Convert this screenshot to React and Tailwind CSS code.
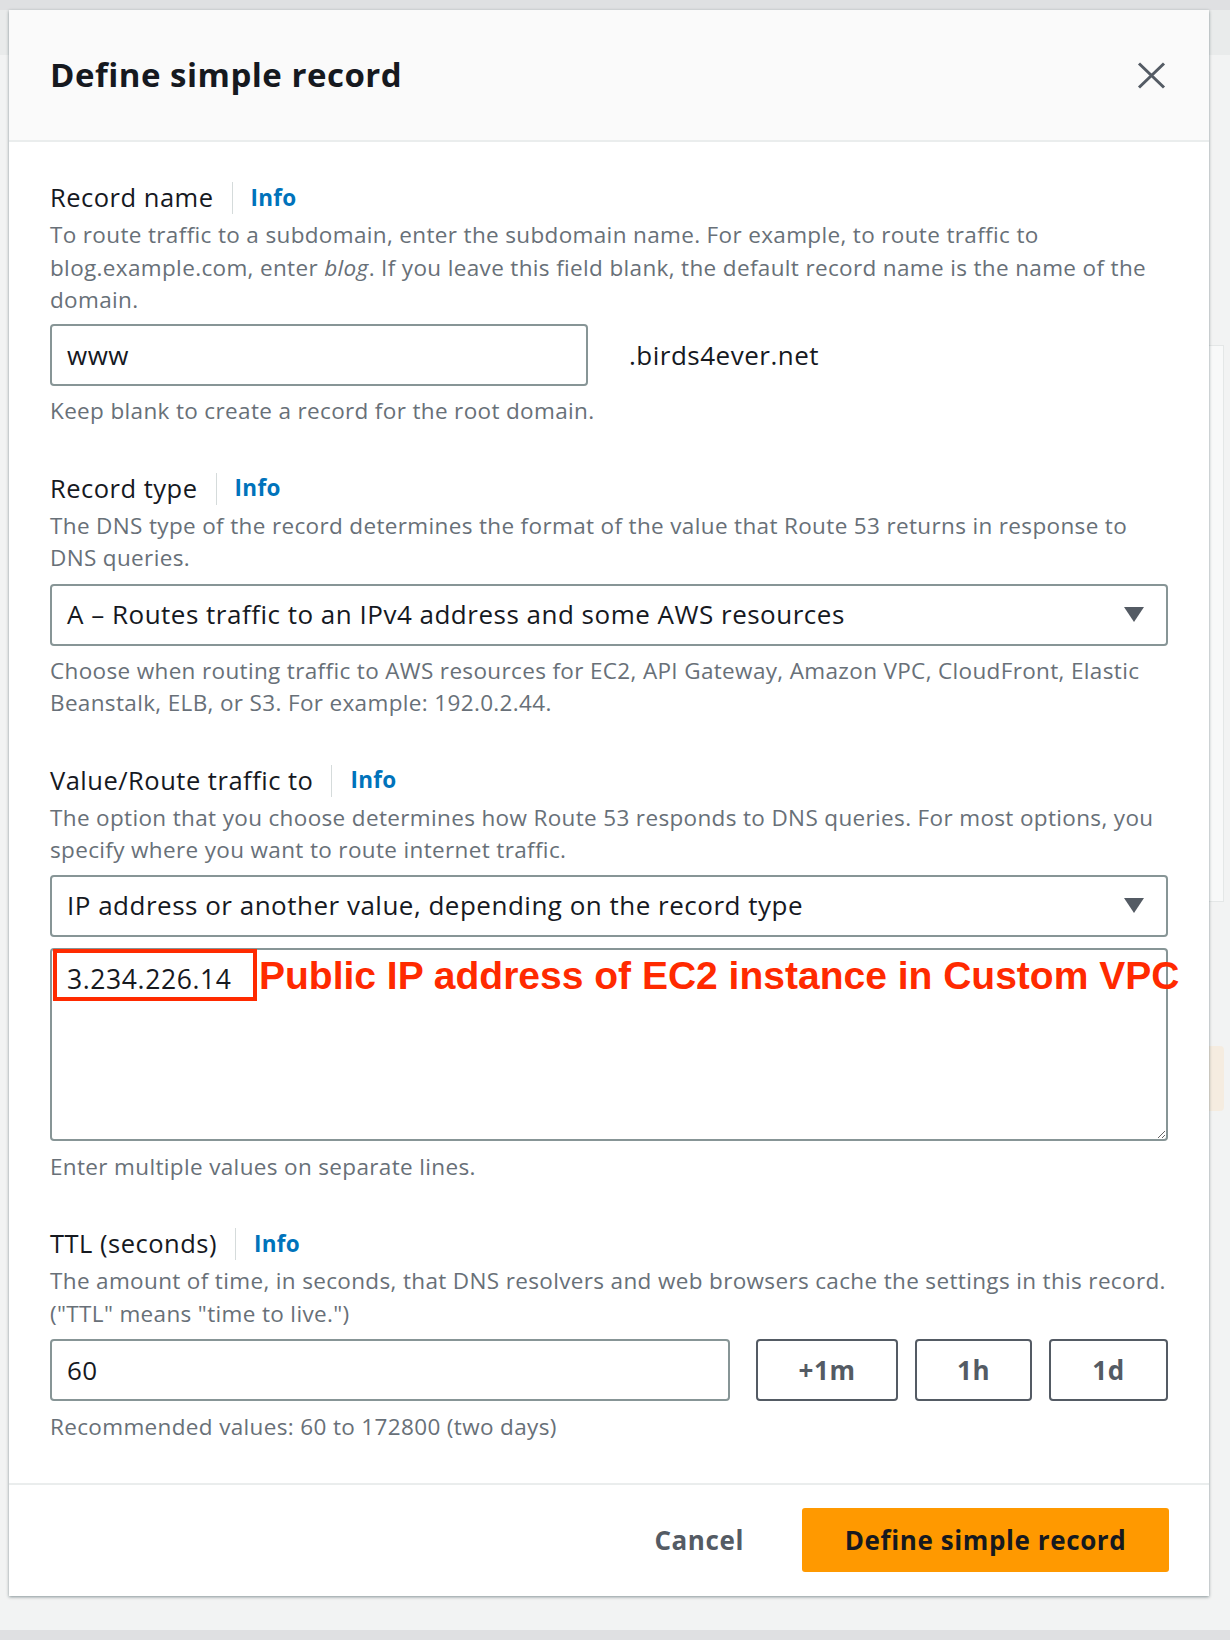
import React from "react";

const ui = "font-['Open_Sans',sans-serif]";

function FieldLabel({ children }) {
  return (
    <div className="flex items-center h-[42px]">
      <span className="text-[25.5px] tracking-[0.5px] text-[#16191f] leading-none">{children}</span>
      <span className="mx-[18px] w-px h-[32px] bg-[#d5dbdb]" />
      <span className="text-[22.5px] tracking-[0.3px] font-bold text-[#0073bb] leading-none">Info</span>
    </div>
  );
}

function Desc({ children, className = "" }) {
  return (
    <p className={"text-[22.5px] tracking-[0.35px] leading-[32.5px] text-[#687078] whitespace-nowrap " + className}>
      {children}
    </p>
  );
}

function Caret() {
  return (
    <svg width="20" height="15" viewBox="0 0 20 15">
      <polygon points="0,0 20,0 10,15" fill="#545b64" />
    </svg>
  );
}

function SelectBox({ children }) {
  return (
    <div className="flex items-center justify-between h-[62px] border-2 border-[#879596] rounded-[4px] pl-[15px] pr-[22px] bg-white">
      <span className="text-[26px] tracking-[0.5px] text-[#16191f]">{children}</span>
      <Caret />
    </div>
  );
}

function TtlButton({ label, w }) {
  return (
    <button
      className={
        "h-[62px] border-2 border-[#545b64] rounded-[4px] bg-white text-[26px] tracking-[0.6px] font-bold text-[#545b64] " +
        w
      }
    >
      {label}
    </button>
  );
}

export default function App() {
  return (
    <div className={"relative w-full h-[1640px] overflow-hidden bg-[#f2f3f3] " + ui}>
      {/* page behind the modal */}
      <div className="flex flex-col h-full">
        <div className="h-[10px] bg-[#dfe0e2]" />
        <div className="h-[45px] bg-[#e9ebeb]" />
        <div className="flex-1 flex justify-end pr-[6px]">
          <div className="mt-[290px] w-[200px] flex flex-col gap-[144px]">
            <div className="h-[557px] bg-[#f8f9f9] border border-[#e4e7e7]" />
            <div className="h-[65px] bg-[#f5ece0] rounded-[4px]" />
          </div>
        </div>
        <div className="h-[10px] bg-[#dfe0e2]" />
      </div>

      {/* modal */}
      <div className="absolute left-[9px] top-[10px] w-[1200px] bg-white shadow-[0_1px_3px_rgba(0,28,36,0.45)] flex flex-col">
        <div className="h-[132px] bg-[#fafafa] border-b-2 border-[#eaeded] flex items-center justify-between pl-[41px] pr-[43px]">
          <h1 className="text-[33px] font-bold text-[#16191f] tracking-[0.5px]">
            Define simple record
          </h1>
          <svg width="29" height="27" viewBox="0 0 29 27">
            <path d="M2 1.5 L27 25.5 M27 1.5 L2 25.5" stroke="#545b64" strokeWidth="3" />
          </svg>
        </div>

        <div className="px-[41px] pt-[35px] pb-[39px] flex flex-col">
          {/* record name */}
          <FieldLabel>Record name</FieldLabel>
          <Desc>
            To route traffic to a subdomain, enter the subdomain name. For example, to route traffic to
            <br />
            blog.example.com, enter <i>blog</i>. If you leave this field blank, the default record name is the name of the
            <br />
            domain.
          </Desc>
          <div className="mt-[7.5px] flex items-center">
            <div className="w-[538px] h-[62px] border-2 border-[#879596] rounded-[4px] flex items-center pl-[15px]">
              <span className="text-[26px] tracking-[0.5px] text-[#16191f]">www</span>
            </div>
            <span className="ml-[41px] text-[26px] tracking-[0.5px] text-[#16191f]">.birds4ever.net</span>
          </div>
          <Desc className="mt-[9px]">Keep blank to create a record for the root domain.</Desc>

          {/* record type */}
          <div className="mt-[40px]">
            <FieldLabel>Record type</FieldLabel>
            <Desc>
              The DNS type of the record determines the format of the value that Route 53 returns in response to
              <br />
              DNS queries.
            </Desc>
            <div className="mt-[9px]">
              <SelectBox>A – Routes traffic to an IPv4 address and some AWS resources</SelectBox>
            </div>
            <Desc className="mt-[9px]">
              Choose when routing traffic to AWS resources for EC2, API Gateway, Amazon VPC, CloudFront, Elastic
              <br />
              Beanstalk, ELB, or S3. For example: 192.0.2.44.
            </Desc>
          </div>

          {/* value */}
          <div className="mt-[40px]">
            <FieldLabel>Value/Route traffic to</FieldLabel>
            <Desc>
              The option that you choose determines how Route 53 responds to DNS queries. For most options, you
              <br />
              specify where you want to route internet traffic.
            </Desc>
            <div className="mt-[8px]">
              <SelectBox>IP address or another value, depending on the record type</SelectBox>
            </div>
            <div className="relative mt-[11px]">
              <textarea
                readOnly
                value="3.234.226.14"
                className="block w-full h-[193px] border-2 border-[#879596] rounded-[4px] pl-[15px] pt-[13px] text-[26.5px] tracking-[0.6px] leading-[32px] text-[#16191f] font-['Open_Sans',sans-serif] outline-none"
              />
              <div className="absolute left-[3px] top-[1px] w-[204px] h-[52px] border-[4px] border-[#ff2a00]" />
              <span className="absolute left-[209px] top-[8px] text-[39px] leading-none font-bold text-[#ff2a00] whitespace-nowrap font-['Liberation_Sans',Arial,sans-serif]">
                Public IP address of EC2 instance in Custom VPC
              </span>
            </div>
            <Desc className="mt-[10px]">Enter multiple values on separate lines.</Desc>
          </div>

          {/* ttl */}
          <div className="mt-[40px]">
            <FieldLabel>TTL (seconds)</FieldLabel>
            <Desc>
              The amount of time, in seconds, that DNS resolvers and web browsers cache the settings in this record.
              <br />
              ("TTL" means "time to live.")
            </Desc>
            <div className="mt-[9px] flex items-center">
              <div className="flex-1 h-[62px] border-2 border-[#879596] rounded-[4px] flex items-center pl-[15px]">
                <span className="text-[26px] tracking-[0.5px] text-[#16191f]">60</span>
              </div>
              <div className="ml-[26px] flex gap-[17px]">
                <TtlButton label="+1m" w="w-[142px]" />
                <TtlButton label="1h" w="w-[117px]" />
                <TtlButton label="1d" w="w-[119px]" />
              </div>
            </div>
            <Desc className="mt-[10px]">Recommended values: 60 to 172800 (two days)</Desc>
          </div>
        </div>

        <div className="h-[113px] border-t-2 border-[#eaeded] flex items-center justify-end pr-[40px]">
          <button className="text-[26px] tracking-[0.6px] font-bold text-[#545b64] px-[16px] mr-[42px]">Cancel</button>
          <button className="w-[367px] h-[64px] rounded-[3px] bg-[#ff9900] text-[26px] tracking-[0.6px] font-bold text-[#16191f]">
            Define simple record
          </button>
        </div>
      </div>
    </div>
  );
}
